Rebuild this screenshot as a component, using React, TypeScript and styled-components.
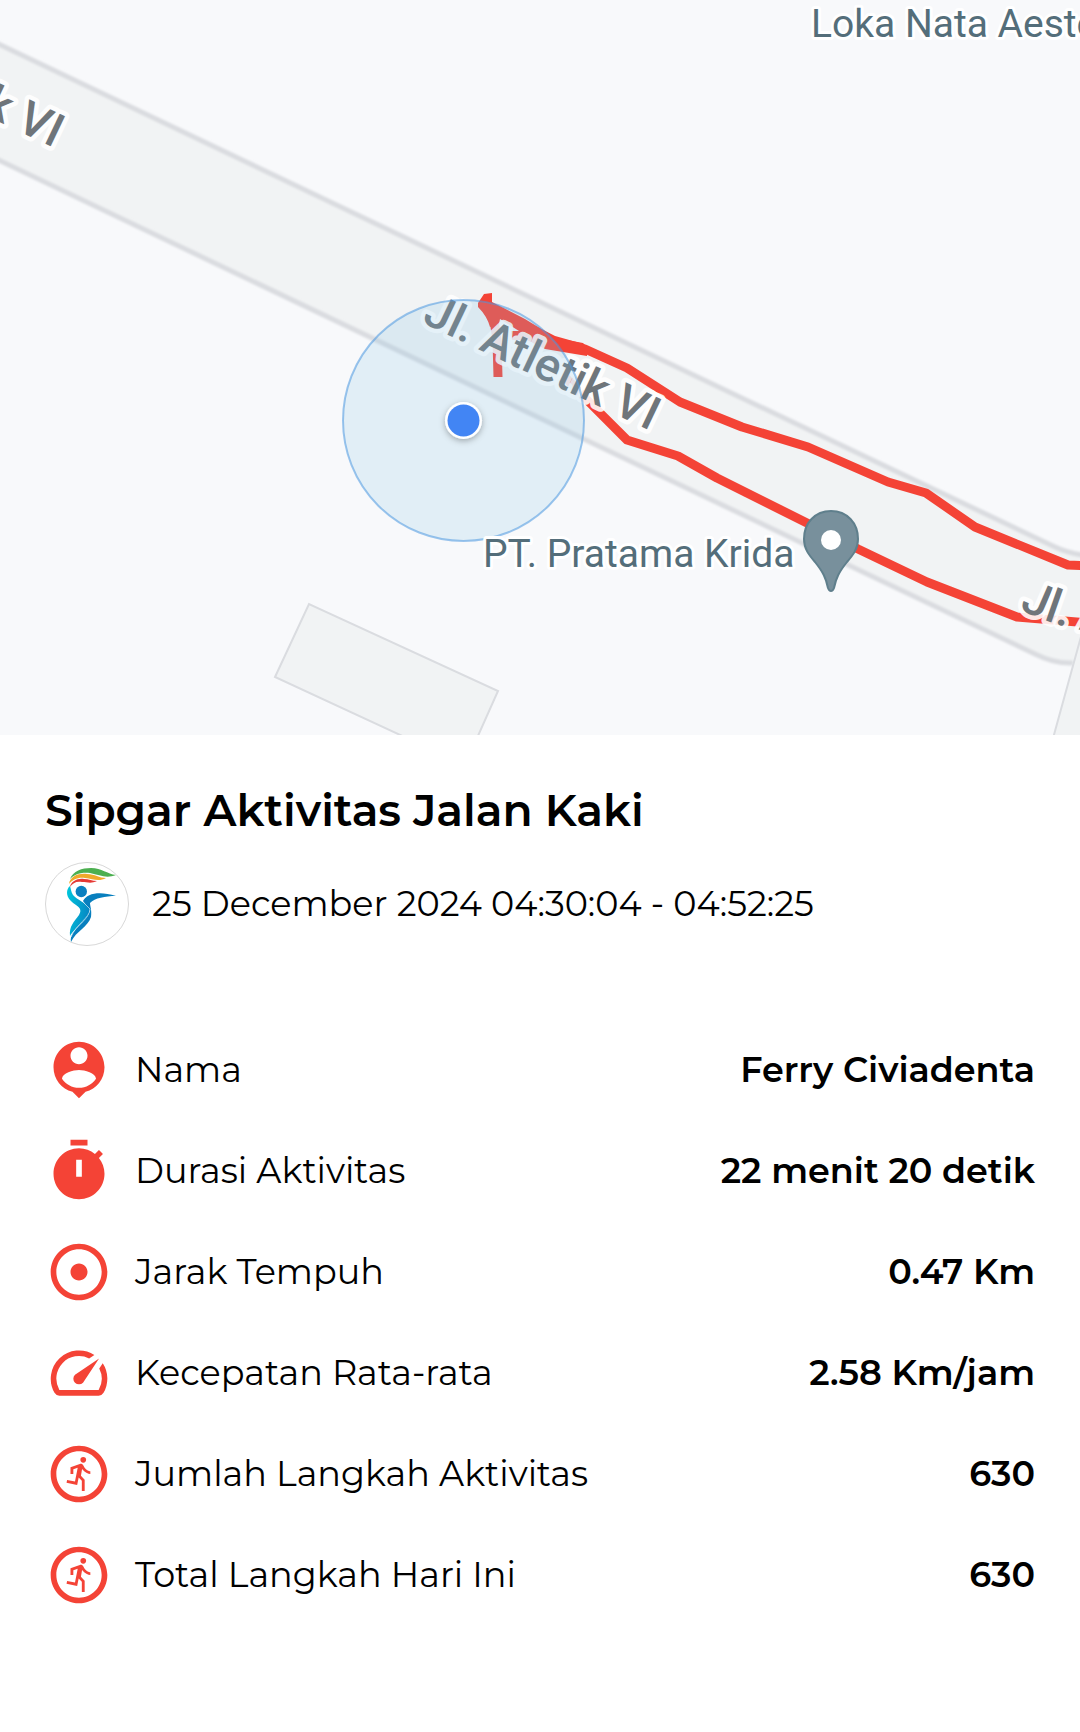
import React from "react";
import styled, { createGlobalStyle } from "styled-components";
import { MdAdjust, MdOutlineRunCircle, MdSpeed } from "react-icons/md";

const GlobalStyle = createGlobalStyle`
  * { box-sizing: border-box; }
  body {
    margin: 0;
    background: #fff;
    color: #000;
    font-family: Montserrat, Inter, "Noto Sans", sans-serif;
  }
`;

const Page = styled.main`
  display: flex;
  flex-direction: column;
  min-height: 100vh;
`;

const MapPanel = styled.section`
  height: 735px;
  overflow: hidden;
  background: #f8f9fb;
`;

const MapCanvas = styled.svg`
  display: block;
  width: 100%;
  height: 100%;
`;

const RoadLabel = styled.text`
  font: 500 47px Roboto, sans-serif;
  fill: #6f757a;
  stroke: rgba(255, 255, 255, 0.88);
  stroke-width: 9px;
  stroke-linejoin: round;
  paint-order: stroke;
`;

const PlaceLabel = styled.text`
  font: 400 39px Roboto, sans-serif;
  fill: #546e7a;
  stroke: #fff;
  stroke-width: 6px;
  stroke-linejoin: round;
  paint-order: stroke;
`;

const Details = styled.section`
  display: flex;
  flex-direction: column;
  padding: 47px 45px;
`;

const Title = styled.h1`
  margin: 0;
  font-size: 44px;
  font-weight: 600;
  line-height: 56px;
`;

const Session = styled.div`
  display: flex;
  align-items: center;
  gap: 23px;
  margin-top: 24px;
`;

const Logo = styled.svg`
  flex: none;
  width: 84px;
  height: 84px;
`;

const SessionTime = styled.time`
  font-size: 35px;
  font-weight: 400;
  line-height: 48px;
`;

const Stats = styled.dl`
  display: flex;
  flex-direction: column;
  gap: 33px;
  margin: 90px 0 0;
`;

const StatRow = styled.div`
  display: flex;
  align-items: center;
  min-height: 68px;
`;

const StatLabel = styled.dt`
  display: flex;
  align-items: center;
  gap: 22px;
  flex: 1;
  font-size: 35px;
  font-weight: 400;
  line-height: 48px;

  svg {
    flex: none;
    width: 68px;
    height: 68px;
    color: #f44336;
  }
`;

const StatValue = styled.dd`
  margin: 0;
  font-size: 35px;
  font-weight: 600;
  line-height: 48px;
  text-align: right;
`;

const PersonPinIcon = () => (
  <svg viewBox="0 0 24 24" fill="currentColor" aria-hidden="true">
    <path d="M12 2c-4.97 0-9 4.03-9 9 0 4.17 2.84 7.67 6.69 8.69L12 22l2.31-2.31C18.16 18.67 21 15.17 21 11c0-4.97-4.03-9-9-9zm0 2c1.66 0 3 1.34 3 3s-1.34 3-3 3-3-1.34-3-3 1.34-3 3-3zm0 14.3c-2.5 0-4.71-1.28-6-3.22.03-1.99 4-3.08 6-3.08 1.99 0 5.97 1.09 6 3.08-1.29 1.94-3.5 3.22-6 3.22z" />
  </svg>
);

const TimerIcon = () => (
  <svg viewBox="0 0 24 24" fill="currentColor" aria-hidden="true">
    <path d="M15 1H9v2h6V1zm4.03 6.39 1.42-1.42c-.43-.51-.9-.99-1.41-1.41l-1.42 1.42C16.07 4.74 14.12 4 12 4c-4.97 0-9 4.03-9 9s4.02 9 9 9 9-4.03 9-9c0-2.12-.74-4.07-1.97-5.61zM13 14h-2V8h2v6z" />
  </svg>
);

const stats = [
  { label: "Nama", value: "Ferry Civiadenta", Icon: PersonPinIcon },
  { label: "Durasi Aktivitas", value: "22 menit 20 detik", Icon: TimerIcon },
  { label: "Jarak Tempuh", value: "0.47 Km", Icon: MdAdjust },
  { label: "Kecepatan Rata-rata", value: "2.58 Km/jam", Icon: MdSpeed },
  { label: "Jumlah Langkah Aktivitas", value: "630", Icon: MdOutlineRunCircle },
  { label: "Total Langkah Hari Ini", value: "630", Icon: MdOutlineRunCircle },
];

const RouteMap = () => (
  <MapCanvas viewBox="0 0 1080 735" preserveAspectRatio="xMidYMid slice" role="img" aria-label="Jl. Atletik VI">
    <defs>
      <path id="road-east" d="M1019 609 Q1045 622 1074 629 L1300 661" />
      <filter id="dot-shadow" x="-50%" y="-50%" width="200%" height="200%">
        <feDropShadow dx="0" dy="2" stdDeviation="3" floodOpacity="0.3" />
      </filter>
      <filter id="soft-edge" x="-5%" y="-5%" width="110%" height="110%">
        <feGaussianBlur stdDeviation="0.8" />
      </filter>
    </defs>

    <path d="M-10 40 L1055 547 Q1070 554 1090 556 V663 H1073 Q1055 664 1035 654 L-10 156Z" fill="#f1f3f4" />
    <g fill="none" stroke="#dadce0" strokeWidth="5" filter="url(#soft-edge)">
      <path d="M-10 40 L1055 547 Q1070 554 1090 556" />
      <path d="M-10 156 L1035 654 Q1055 664 1073 663" />
    </g>
    <g fill="#f1f3f4" stroke="#dadce0" strokeWidth="2">
      <path d="M275 677 L309 604 L498 691 L465 765Z" />
      <path d="M1090 604 L1052 742 H1100" />
    </g>

    <g fill="none" stroke="#f44336" strokeWidth="9" strokeLinejoin="round">
      <path d="M483 304 L553 340 L585 349 L627 368 L680 402 L742 427 L808 447 L888 482 L926 493 L975 527 L1068 565 L1090 566" />
      <path d="M566 378 L590 403 L627 440 L678 456 L717 478 L807 523 L858 549 L927 582 L1017 617 L1090 623" />
      <path d="M484 305 L494 320 L497 340 L498 377" />
    </g>
    <path d="M478 303 L484 294 L492 293 V302 L525 319 L556 338 L583 343 L587 347 V356 L545 349 L527 340 L512 340 L511 331 H519 L500 319 L499 324 L490 327 Q487 316 478 307Z" fill="#f44336" />

    <RoadLabel textAnchor="end" transform="translate(54 148) rotate(25.4)">Jl. Atletik VI</RoadLabel>
    <RoadLabel transform="translate(421 322) rotate(25.4)">Jl. Atletik VI</RoadLabel>
    <RoadLabel>
      <textPath href="#road-east">Jl. Atletik VI</textPath>
    </RoadLabel>

    <circle cx="463.5" cy="420.5" r="120.5" fill="#85c2e7" fillOpacity="0.2" stroke="#4a98e0" strokeOpacity="0.55" strokeWidth="2" />
    <circle cx="463.5" cy="420.5" r="18.5" fill="#fff" filter="url(#dot-shadow)" />
    <circle cx="463.5" cy="420.5" r="16" fill="#4285f4" />

    <PlaceLabel x="811" y="37">Loka Nata Aestetic</PlaceLabel>
    <PlaceLabel x="483" y="567">PT. Pratama Krida</PlaceLabel>
    <path
      d="M831 511 C815 511 804 523 804 539 C804 549 809 555 815 562 C823 572 826 578 828 588 Q829 591 831 591 Q833 591 834 588 C836 578 839 572 847 562 C853 555 858 549 858 539 C858 523 847 511 831 511Z"
      fill="#78909c"
      stroke="#5f7f8c"
      strokeWidth="2"
    />
    <circle cx="831" cy="540" r="10" fill="#fff" />
  </MapCanvas>
);

const SipgarLogo = () => (
  <Logo viewBox="0 0 84 84" role="img" aria-label="Sipgar">
    <defs>
      <linearGradient id="logo-body" x1="0" y1="0" x2="1" y2="0.3">
        <stop offset="0" stopColor="#00c8dc" />
        <stop offset="1" stopColor="#0688c4" />
      </linearGradient>
    </defs>
    <circle cx="42" cy="42" r="41.5" fill="#fff" stroke="#d8d8d8" />
    <path d="M25 17 C28 9 37 6 46 6 C57 6 62 12 71 13 C61 17 55 13 45 11 C35 10 29 13 25 17Z" fill="#4caf50" />
    <path d="M24 22 C25 14 34 11 42 12 C50 12 54 16 61 16 C54 20 48 17 40 16 C33 15 27 18 24 22Z" fill="#f0a92b" />
    <path d="M25 25 C26 19 33 16 39 17 C44 17 47 19 52 19 C46 22 42 20 37 20 C31 19 28 21 25 25Z" fill="#e53935" />
    <circle cx="36.3" cy="29.5" r="5.7" fill="#0b80c0" />
    <path d="M25 24 C21 27 21 34 25 38 C30 44 39 45 34 53 C29 60 24 64 25 74 C30 65 45 57 45 47 C42 41 32 38 28 33 C26 30 26 27 25 24Z" fill="url(#logo-body)" />
    <path d="M38 39 C42 31 55 29 71 34 C60 34 50 36 45 41 C45 44 47 48 46 55 C43 65 31 69 26 80 C24 67 43 61 45 48Z" fill="#087fbe" />
    <path d="M38 40 L45 47 C45 56 31 62 26 75" fill="none" stroke="#d8eef8" strokeWidth="0.7" />
  </Logo>
);

export default function App() {
  return (
    <>
      <GlobalStyle />
      <Page>
        <MapPanel>
          <RouteMap />
        </MapPanel>
        <Details>
          <Title>Sipgar Aktivitas Jalan Kaki</Title>
          <Session>
            <SipgarLogo />
            <SessionTime>25 December 2024 04:30:04 - 04:52:25</SessionTime>
          </Session>
          <Stats>
            {stats.map(({ label, value, Icon }) => (
              <StatRow key={label}>
                <StatLabel>
                  <Icon />
                  {label}
                </StatLabel>
                <StatValue>{value}</StatValue>
              </StatRow>
            ))}
          </Stats>
        </Details>
      </Page>
    </>
  );
}
